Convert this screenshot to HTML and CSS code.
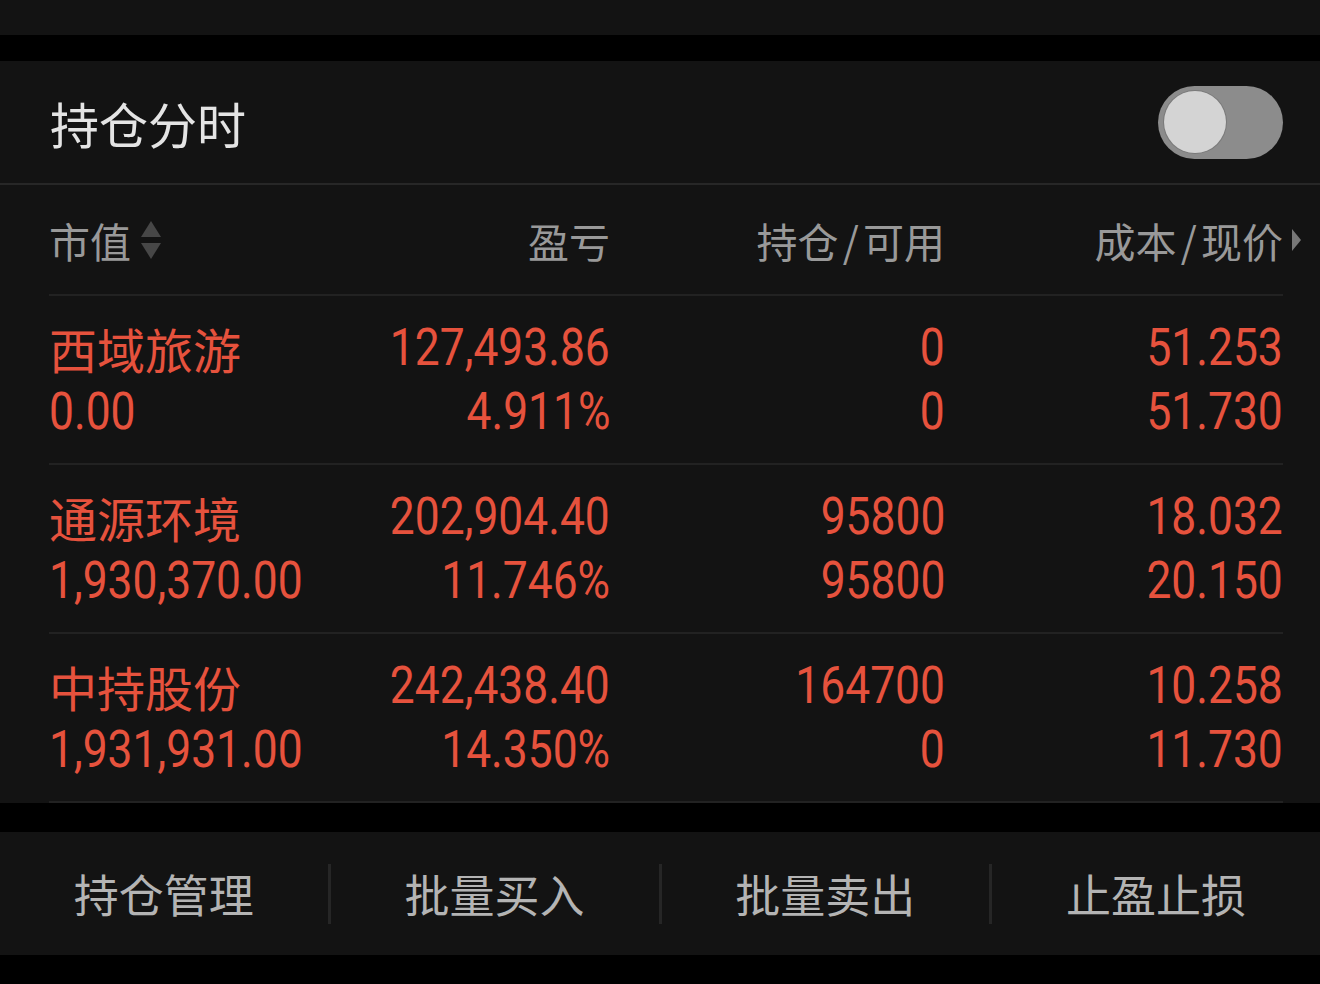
FILE: index.html
```html
<!DOCTYPE html>
<html>
  <head>
    <meta name="viewport" content="width=device-width, initial-scale=1" />
    <link rel="stylesheet" href="styles.css">
  </head>
  <body>
    <div class="topbar"></div>

    <div class="panel">
      <div class="title-row">
        <span class="title">持仓分时</span>
        <div class="toggle"><span class="knob"></span></div>
      </div>

      <div class="table">
        <div class="row head">
          <div class="cell left">
            市值
            <svg class="sort" width="22" height="40" viewBox="0 0 22 40">
              <path d="M11 1 L21 17 L1 17 Z" fill="#474747" />
              <path d="M11 39 L21 23 L1 23 Z" fill="#474747" />
            </svg>
          </div>
          <div class="cell">盈亏</div>
          <div class="cell"><span class="label">持仓 / 可用</span></div>
          <div class="cell last">
            <span class="label">成本 / 现价</span>
            <svg class="more" width="11" height="24" viewBox="0 0 11 24">
              <path d="M1 1 L10 12 L1 23 Z" fill="#777" />
            </svg>
          </div>
        </div>

        <div class="row item">
          <div class="cell left"><span class="name">西域旅游</span><span class="num">0.00</span></div>
          <div class="cell"><span class="num">127,493.86</span><span class="num">4.911%</span></div>
          <div class="cell"><span class="num">0</span><span class="num">0</span></div>
          <div class="cell"><span class="num">51.253</span><span class="num">51.730</span></div>
        </div>

        <div class="row item">
          <div class="cell left"><span class="name">通源环境</span><span class="num">1,930,370.00</span></div>
          <div class="cell"><span class="num">202,904.40</span><span class="num">11.746%</span></div>
          <div class="cell"><span class="num">95800</span><span class="num">95800</span></div>
          <div class="cell"><span class="num">18.032</span><span class="num">20.150</span></div>
        </div>

        <div class="row item">
          <div class="cell left"><span class="name">中持股份</span><span class="num">1,931,931.00</span></div>
          <div class="cell"><span class="num">242,438.40</span><span class="num">14.350%</span></div>
          <div class="cell"><span class="num">164700</span><span class="num">0</span></div>
          <div class="cell"><span class="num">10.258</span><span class="num">11.730</span></div>
        </div>
      </div>
    </div>

    <div class="actions">
      <div class="action">持仓管理</div>
      <div class="action">批量买入</div>
      <div class="action">批量卖出</div>
      <div class="action">止盈止损</div>
    </div>
  </body>
</html>
```

FILE: styles.css
```css
/* Общая страница */
html,
body {
  margin: 0;
  padding: 0;
  background: #000;
  height: 984px;
  overflow: hidden;
  font-family: "Noto Sans CJK SC", "Noto Sans", sans-serif;
}

.topbar {
  height: 35px;
  background: #131313;
  margin-bottom: 26px;
}

.panel {
  background: #131313;
}

/* Заголовок с переключателем */
.title-row {
  height: 122px;
  display: flex;
  align-items: center;
  justify-content: space-between;
  padding: 0 37px 0 50px;
  border-bottom: 2px solid #272727;
}

.title {
  font-size: 49px;
  color: #e4e4e4;
}

.toggle {
  width: 125px;
  height: 73px;
  border-radius: 37px;
  background: #8c8c8c;
  display: flex;
  align-items: center;
  padding-left: 6px;
  box-sizing: border-box;
}

.knob {
  width: 62px;
  height: 62px;
  border-radius: 50%;
  background: #d4d4d4;
  box-shadow: 0 0 0 1px #7a7a7a;
}

/* Таблица позиций */
.table {
  padding: 0 37px 0 49px;
}

.row {
  display: grid;
  grid-template-columns: 281px 280px 335px 338px;
  border-bottom: 2px solid #222;
}

.head {
  height: 109px;
  align-items: center;
  font-size: 41px;
  color: #999;
}

.head .cell {
  display: flex;
  align-items: center;
  justify-content: flex-end;
}

.head .cell.left {
  justify-content: flex-start;
}

.label {
  white-space: nowrap;
  word-spacing: -5px;
}

.sort {
  margin-left: 9px;
}

.more {
  margin-left: 8px;
  margin-right: -19px;
}

.item {
  padding: 20px 0 19px;
  color: #e6523d;
}

.item .cell {
  display: flex;
  flex-direction: column;
  align-items: flex-end;
}

.item .cell.left {
  align-items: flex-start;
}

.name,
.num {
  height: 64px;
  line-height: 64px;
  white-space: nowrap;
}

.name {
  font-size: 48px;
}

/* Узкие цифры, как в приложении */
.num {
  font-family: "Roboto", "Liberation Sans", sans-serif;
  font-size: 51px;
  transform: scaleX(0.87);
  transform-origin: right center;
}

.left .num {
  transform-origin: left center;
}

/* Нижняя панель кнопок */
.actions {
  margin-top: 29px;
  height: 123px;
  background: #131313;
  display: flex;
  align-items: center;
}

.action {
  flex: 1;
  text-align: center;
  font-size: 45px;
  color: #b4b4b4;
  line-height: 60px;
  border-left: 3px solid #262626;
}

.action:first-child {
  border-left: none;
}
```
